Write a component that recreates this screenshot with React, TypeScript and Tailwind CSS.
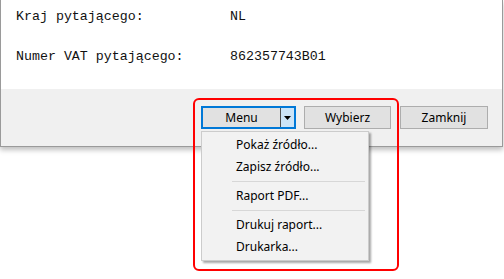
import { ReactNode } from 'react';

const ui = { fontFamily: '"Noto Sans", "Open Sans", sans-serif' };
const mono = { fontFamily: '"Liberation Mono", "Courier New", monospace' };

function MenuItem({ children }: { children: ReactNode }) {
  return <div className="h-[22px] pl-[34px] flex items-center text-[12px] text-black">{children}</div>;
}

function Separator() {
  return (
    <div className="h-[7px] flex items-center pl-[30px] pr-[3px]">
      <div className="h-px w-full bg-[#d7d7d7]" />
    </div>
  );
}

export default function App() {
  return (
    <div className="relative w-[504px] h-[279px] bg-white overflow-hidden" style={ui}>
      <div className="w-[503px] border-l border-r border-b border-[#9a9a9a] shadow-[0_3px_5px_rgba(0,0,0,0.25)]">
        <div className="h-[89px] bg-white pl-[15px] pt-[9px] text-[13.3px] leading-[16px] text-[#111]" style={mono}>
          <div className="flex">
            <span className="w-[214px]">Kraj pytającego:</span>
            <span>NL</span>
          </div>
          <div className="flex mt-[24px]">
            <span className="w-[214px]">Numer VAT pytającego:</span>
            <span>862357743B01</span>
          </div>
        </div>
        <div className="h-[57px] bg-[#f0f0f0] flex pt-[17px] pl-[200px] text-[12px] text-black">
          <div className="flex h-[23px] w-[95px] border-2 border-[#0078d7] bg-[#e1e1e1]">
            <div className="flex-1 flex items-center justify-center border-r border-[#505050] pt-px">Menu</div>
            <div className="w-[13px] bg-[#cce4f7] flex items-center justify-center">
              <svg width="7" height="4" viewBox="0 0 7 4">
                <path d="M0 0h7L3.5 4z" fill="#000" />
              </svg>
            </div>
          </div>
          <div className="ml-[8px] w-[87px] h-[23px] border border-[#adadad] bg-[#e1e1e1] flex items-center justify-center">
            Wybierz
          </div>
          <div className="ml-[9px] w-[88px] h-[23px] border border-[#adadad] bg-[#e1e1e1] flex items-center justify-center">
            Zamknij
          </div>
        </div>
      </div>

      <div className="absolute left-[201px] top-[131px] w-[168px] border border-[#cccccc] bg-[#f2f2f2] py-[2px] shadow-[2px_2px_2px_rgba(0,0,0,0.35)]">
        <MenuItem>Pokaż źródło...</MenuItem>
        <MenuItem>Zapisz źródło...</MenuItem>
        <Separator />
        <MenuItem>Raport PDF...</MenuItem>
        <Separator />
        <MenuItem>Drukuj raport...</MenuItem>
        <MenuItem>Drukarka...</MenuItem>
      </div>

      <div className="absolute left-[193px] top-[98px] w-[206px] h-[173px] border-2 border-[#ff0000] rounded-[6px]" />
    </div>
  );
}
